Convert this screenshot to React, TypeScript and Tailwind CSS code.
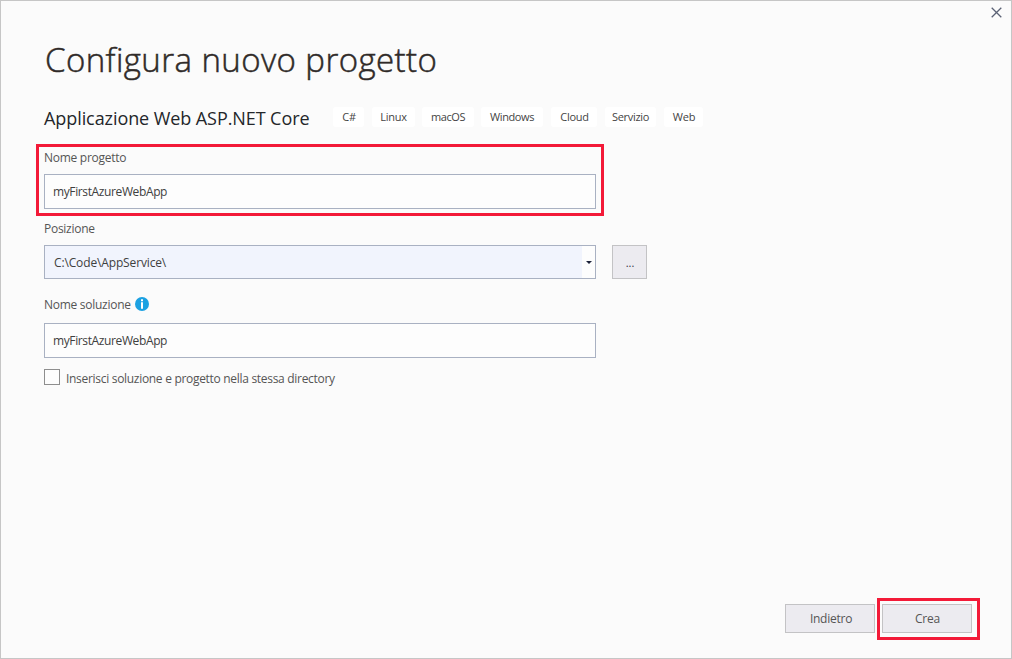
import type { ReactNode } from "react";

const tags = [
  { name: "C#", box: "w-[31px]", text: "tracking-[-0.2px] pl-px" },
  { name: "Linux", box: "w-[43px] ml-[8px]", text: "tracking-[-0.3px]" },
  { name: "macOS", box: "w-[52px] ml-[7px]", text: "tracking-[-0.4px]" },
  { name: "Windows", box: "w-[62px] ml-[7px]", text: "tracking-[-0.4px]" },
  { name: "Cloud", box: "w-[46px] ml-[8px]", text: "tracking-[-0.3px] pl-px" },
  { name: "Servizio", box: "w-[51px] ml-[8px]", text: "tracking-[-0.3px]" },
  { name: "Web", box: "w-[39px] ml-[8px]", text: "tracking-[-0.2px] pl-px" },
];

function Label({ children }: { children: ReactNode }) {
  return <label className="block h-4 whitespace-nowrap text-[12px] leading-4 tracking-[-0.27px] text-[#555555]">{children}</label>;
}

function TextBox({ value }: { value: string }) {
  return (
    <div className="flex h-[35px] w-[552px] items-center border border-[#a9b1c2] bg-[#fdfdfd] pl-2 text-[12px] tracking-[-0.38px] text-[#404040]">
      <span>{value}</span>
    </div>
  );
}

export default function App() {
  return (
    <div className="flex h-[659px] w-[1012px] flex-col overflow-hidden border border-[#c6c6c6] bg-[#fbfbfb] font-['Open_Sans','Noto_Sans',sans-serif]">
      <header className="flex h-[39px] shrink-0 justify-end pr-[9px] pt-[6px]">
        <svg className="h-[11px] w-[11px]" viewBox="0 0 11 11" fill="none" stroke="#5b6275" strokeWidth="1.3" aria-label="Chiudi">
          <path d="M0.7 0.7 10.3 10.3M10.3 0.7 0.7 10.3" />
        </svg>
      </header>

      <main className="flex flex-col">
        <h1 className="ml-[44px] h-10 whitespace-nowrap text-[33px] font-light leading-10 tracking-[0.42px] text-[#2f2a28] [-webkit-text-stroke:0.5px_#2f2a28]">
          Configura nuovo progetto
        </h1>

        <div className="ml-[43px] mt-[26px] flex h-6">
          <h2 className="w-[289px] whitespace-nowrap text-[18px] leading-6 tracking-[-0.08px] text-[#23262a]">
            Applicazione Web ASP.NET Core
          </h2>
          <div className="mt-px flex">
            {tags.map((tag) => (
              <div key={tag.name} className={`flex h-5 justify-center rounded-[3px] bg-white text-[11px] leading-5 text-[#444444] ${tag.box}`}>
                <span className={tag.text}>{tag.name}</span>
              </div>
            ))}
          </div>
        </div>

        <section className="ml-[35px] mt-[14px] h-[72px] w-[568px] border-3 border-[#f31a38] pl-[5px] pt-[3px]">
          <Label>Nome progetto</Label>
          <div className="mt-[8px]">
            <TextBox value="myFirstAzureWebApp" />
          </div>
        </section>

        <section className="ml-[43px] mt-[5px]">
          <Label>Posizione</Label>
          <div className="mt-[8px] flex">
            <div className="flex h-[34px] w-[552px] border border-[#a9b1c2] bg-[#fdfdfd]">
              <div className="flex flex-1 items-center bg-[#f1f4fd] pl-[9px] pt-[2px] text-[12px] tracking-[-0.14px] text-[#404040]">C:\Code\AppService\</div>
              <div className="flex w-[13px] items-center justify-center pt-px">
                <svg className="h-[3px] w-[6px]" viewBox="0 0 6 3" fill="#1b2138">
                  <path d="M0 0h6L3 3z" />
                </svg>
              </div>
            </div>
            <button className="ml-[16px] flex h-[34px] w-[35px] items-center justify-center border border-[#c3c3c5] bg-[#ecebf0] pl-px pt-[3px] text-[11px] text-[#333345]">
              ...
            </button>
          </div>
        </section>

        <section className="ml-[43px] mt-[18px]">
          <div className="flex h-4">
            <Label>Nome soluzione</Label>
            <svg className="ml-[4px] h-[14px] w-[14px]" viewBox="0 0 14 14">
              <circle cx="7" cy="7" r="7" fill="#1ba1e2" />
              <path d="M6 2.2h2v2H6zM6 5.3h2v6.5H6z" fill="#ffffff" />
            </svg>
          </div>
          <div className="mt-[10px]">
            <TextBox value="myFirstAzureWebApp" />
          </div>
          <div className="mt-[11px] flex h-4">
            <span className="h-4 w-4 border border-[#8e8e8e] bg-[#fdfdfd]" />
            <span className="ml-[6px] mt-[2px] whitespace-nowrap text-[12px] leading-4 tracking-[-0.3px] text-[#555555]">
              Inserisci soluzione e progetto nella stessa directory
            </span>
          </div>
        </section>
      </main>

      <footer className="mb-[18px] mt-auto flex justify-end pr-[31px]">
        <button className="mr-[2px] mt-[6px] h-[29px] w-[90px] border border-[#c3c3c5] bg-[#ecebf0] pl-[2px] text-[12px] tracking-[-0.25px] text-[#555555]">
          Indietro
        </button>
        <div className="h-[42px] w-[103px] border-3 border-[#f31a38] pl-[2px] pt-[3px]">
          <button className="block h-[29px] w-[90px] border border-[#c3c3c5] bg-[#ecebf0] pl-px text-[12px] tracking-[-0.25px] text-[#555555]">
            Crea
          </button>
        </div>
      </footer>
    </div>
  );
}
